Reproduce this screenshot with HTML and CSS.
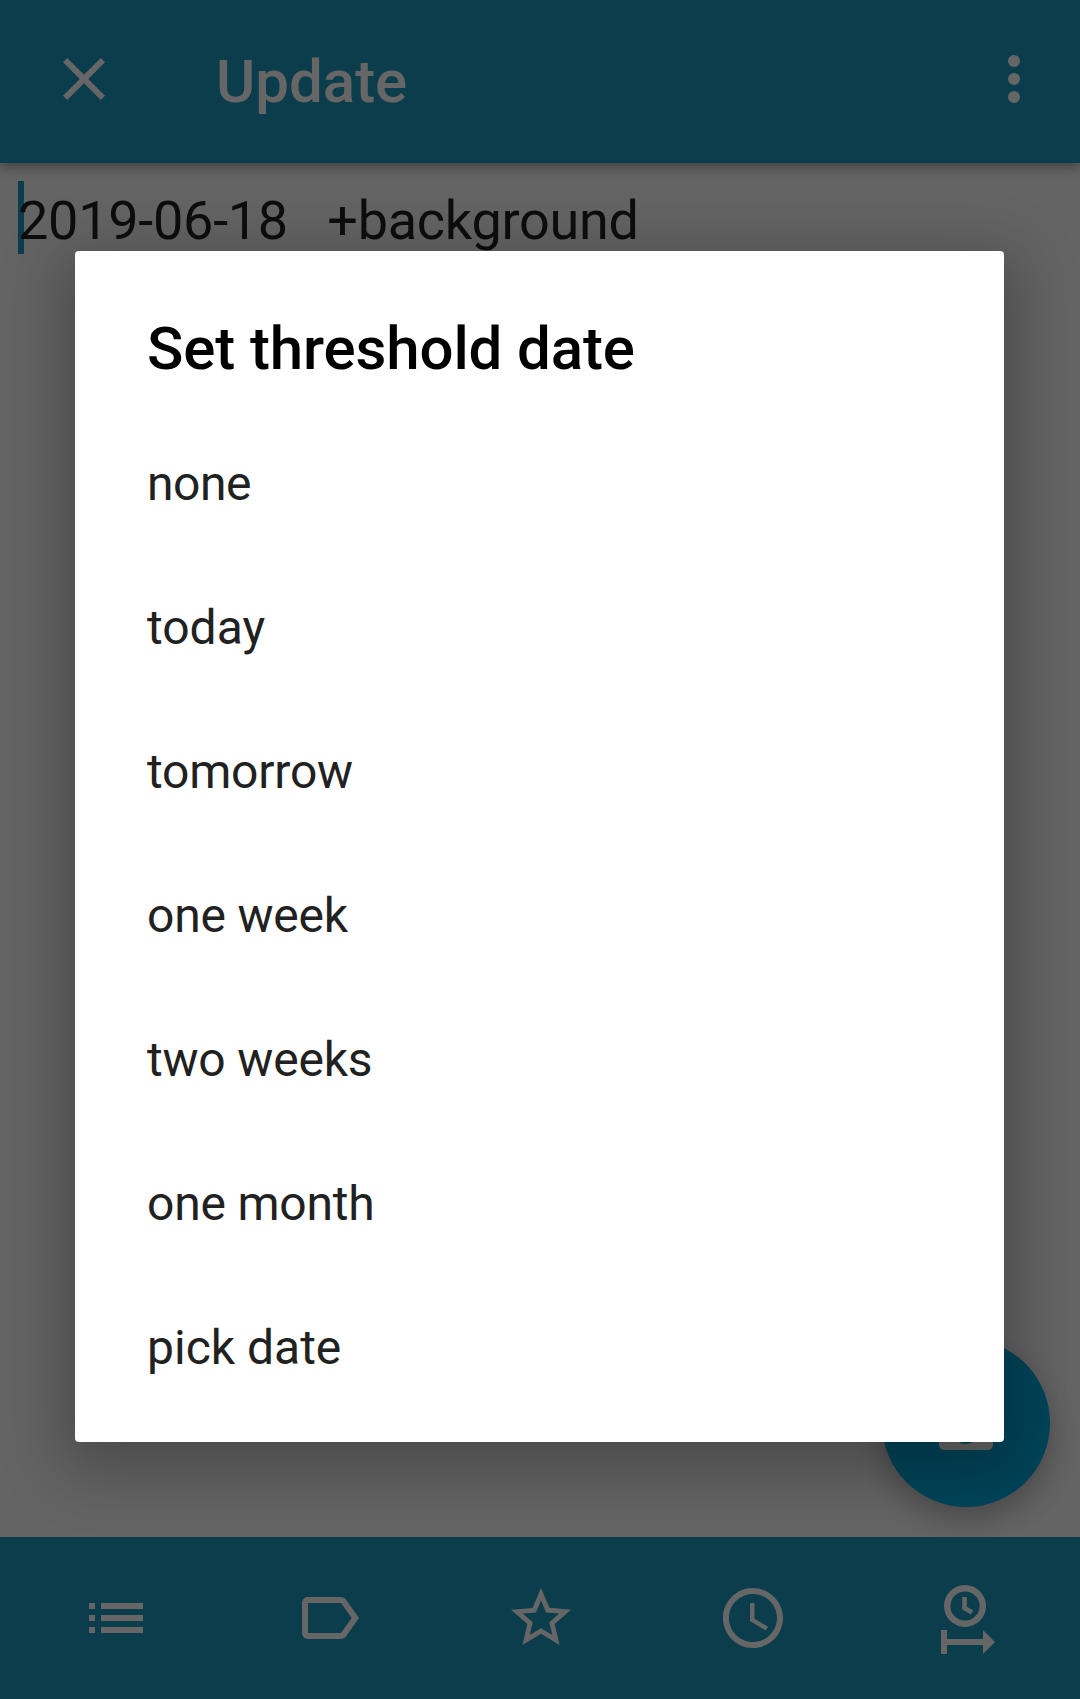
FILE: index.html
```html
<!DOCTYPE html>
<html lang="en">
<head>
<meta charset="utf-8">
<title>Update</title>
<link rel="stylesheet" href="styles.css">
</head>
<body>
<div class="screen">
  <header class="app-bar">
    <svg class="icon" viewBox="0 0 24 24"><path d="M19 6.41 17.59 5 12 10.59 6.41 5 5 6.41 10.59 12 5 17.59 6.41 19 12 13.41 17.59 19 19 17.59 13.41 12z"/></svg>
    <h1 class="app-title">Update</h1>
    <svg class="icon" viewBox="0 0 24 24"><circle cx="12" cy="6" r="2"/><circle cx="12" cy="12" r="2"/><circle cx="12" cy="18" r="2"/></svg>
  </header>
  <main class="editor">
    <div class="editor-line"><span class="caret"></span>2019-06-18   +background</div>
    <button class="fab" aria-label="Camera">
      <svg class="icon" viewBox="0 0 24 24"><path fill-rule="evenodd" d="M9 3 7.5 5H5a2 2 0 0 0-2 2v12.200a1.800 1.800 0 0 0 1.800 1.800h14.400a1.800 1.800 0 0 0 1.800-1.800V7a2 2 0 0 0-2-2h-2.500L15 3zM12 9a5 5 0 0 1 0 10 5 5 0 0 1 0-10z"/></svg>
    </button>
  </main>
  <nav class="tool-bar">
    <svg class="icon" viewBox="0 0 24 24"><path d="M3 13h2v-2H3zm0 4h2v-2H3zm0-8h2V7H3zm4 4h14v-2H7zm0 4h14v-2H7zM7 7v2h14V7z"/></svg>
    <svg class="icon" viewBox="0 0 24 24"><path d="M17.630 5.840C17.270 5.330 16.670 5 16 5L5 5.010C3.900 5.010 3 5.900 3 7v10c0 1.100.9 1.990 2 1.990L16 19c.67 0 1.270-.33 1.630-.84L22 12zM16 17H5V7h11l3.550 5z"/></svg>
    <svg class="icon" viewBox="0 0 24 24"><path d="m22 9.240-7.190-.62L12 2 9.190 8.630 2 9.240l5.460 4.730L5.820 21 12 17.270 18.180 21l-1.630-7.030zM12 15.400l-3.760 2.270 1-4.280-3.320-2.880 4.380-.38L12 6.100l1.710 4.040 4.380.38-3.320 2.880 1 4.280z"/></svg>
    <svg class="icon" viewBox="0 0 24 24"><path d="M11.990 2C6.470 2 2 6.480 2 12s4.470 10 9.990 10C17.520 22 22 17.520 22 12S17.520 2 11.990 2zM12 20c-4.420 0-8-3.580-8-8s3.580-8 8-8 8 3.580 8 8-3.580 8-8 8zM12.500 7H11v6l5.250 3.150.75-1.230-4.500-2.670z"/></svg>
    <svg class="icon" viewBox="0 0 72 72"><circle class="stroke-ring" cx="35" cy="24" r="17.800"/><path class="stroke-hands" d="M34.500 15v11l7.500 4.500"/><path d="M11 48h6v9h36v-9l12 12-12 12v-9H17v9h-6z"/></svg>
  </nav>
  <div class="scrim">
    <section class="dialog" role="dialog">
      <h2 class="dialog-title">Set threshold date</h2>
      <ul class="options">
        <li class="option option-tight">none</li>
        <li class="option option-loose">today</li>
        <li class="option">tomorrow</li>
        <li class="option">one week</li>
        <li class="option">two weeks</li>
        <li class="option">one month</li>
        <li class="option option-loose">pick date</li>
      </ul>
    </section>
  </div>
</div>
</body>
</html>
```
FILE: styles.css
```css
* { box-sizing: border-box; margin: 0; padding: 0; }
body { font-family: Roboto, "Noto Sans", sans-serif; }
.screen {
  position: relative;
  display: flex;
  flex-direction: column;
  width: 1080px;
  height: 1699px;
  overflow: hidden;
  background: #fafafa;
}
.icon { display: block; flex: none; width: 72px; height: 72px; fill: #fff; }
.app-bar {
  display: flex;
  align-items: center;
  height: 163px;
  padding: 0 30px 5px 48px;
  background: #1e98be;
  box-shadow: 0 4px 12px rgba(0, 0, 0, .36);
}
.app-title {
  flex: 1;
  padding: 6px 0 0 96px;
  color: #fff;
  font-size: 60px;
  font-weight: 500;
  line-height: 70px;
}
.editor {
  position: relative;
  flex: 1;
  padding: 18px;
}
.editor-line {
  display: flex;
  height: 73px;
  color: #212121;
  font-size: 54px;
  letter-spacing: -.27px;
  line-height: 80px;
  white-space: pre;
}
.caret { width: 6px; height: 73px; margin-right: -6px; background: #1e98be; }
.fab {
  position: absolute;
  right: 30px;
  bottom: 30px;
  display: grid;
  place-items: center;
  width: 168px;
  height: 168px;
  border: 0;
  border-radius: 50%;
  background: #00aade;
  box-shadow: 0 12px 30px rgba(0, 0, 0, .25);
}
.tool-bar {
  display: flex;
  align-items: center;
  justify-content: space-between;
  height: 162px;
  padding: 0 78.2px 0 80.4px;
  background: #1e98be;
  z-index: 1;
}
.stroke-ring { fill: none; stroke: #fff; stroke-width: 6.400; }
.stroke-hands { fill: none; stroke: #fff; stroke-width: 4.600; }
.scrim {
  position: absolute;
  inset: 0;
  z-index: 1;
  padding: 251px 76px 0 75px;
  background: rgba(0, 0, 0, .6);
}
.dialog {
  height: 1191px;
  border-radius: 4px;
  background: #fff;
  box-shadow: 0 16px 60px 14px rgba(0, 0, 0, .25);
}
.dialog-title {
  height: 161px;
  padding: 63px 72px 0;
  color: #000;
  font-size: 60px;
  font-weight: 500;
  letter-spacing: -.12px;
  line-height: 70px;
}
.options { list-style: none; }
.option {
  height: 144px;
  padding: 0 72px;
  color: #212121;
  font-size: 48px;
  letter-spacing: -.2px;
  line-height: 144px;
}
.option-tight { letter-spacing: -.45px; }
.option-loose { letter-spacing: 0; }
```
